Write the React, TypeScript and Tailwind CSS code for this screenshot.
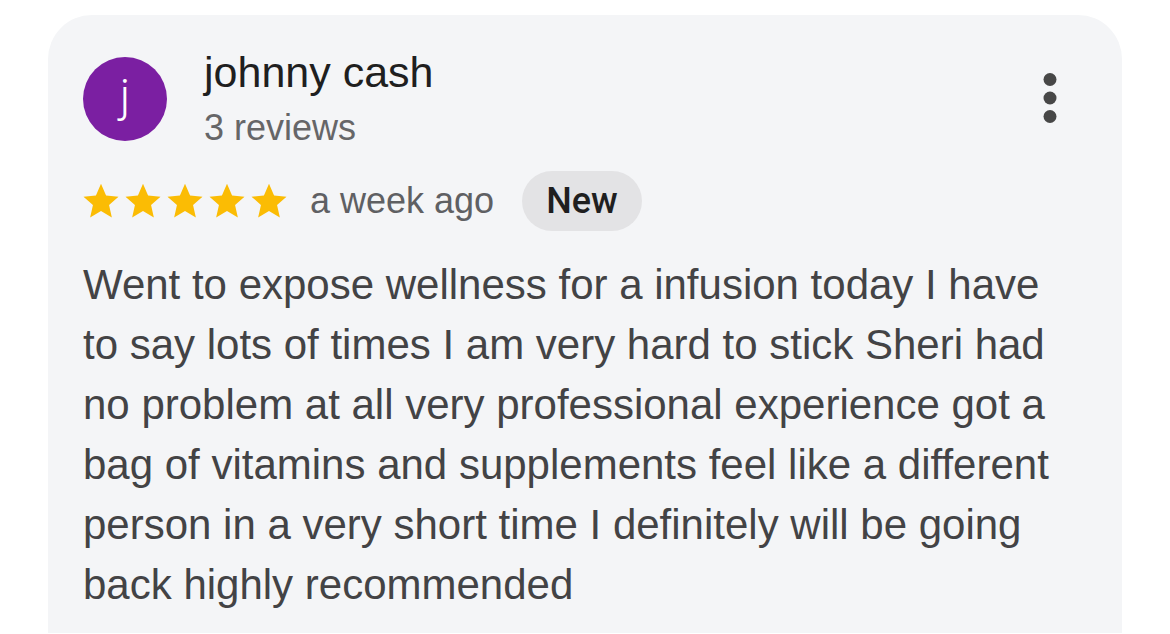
function Star() {
  return (
    <svg viewBox="0 0 24 24" className="w-[42px] h-[42px]" fill="#fbbc04">
      <path d="M12 2.2l2.9 6.6 7.1.7-5.4 4.8 1.6 7.1L12 17.7l-6.2 3.7 1.6-7.1L2 9.5l7.1-.7z" />
    </svg>
  );
}

function MoreDots() {
  return (
    <svg viewBox="0 0 20 56" className="w-[20px] h-[56px]" fill="#474747">
      <circle cx="10" cy="9.5" r="6.5" />
      <circle cx="10" cy="28" r="6.5" />
      <circle cx="10" cy="46.5" r="6.5" />
    </svg>
  );
}

export default function App() {
  const body =
    'Went to expose wellness for a infusion today I have to say lots of times I am very hard to stick Sheri had no problem at all very professional experience got a bag of vitamins and supplements feel like a different person in a very short time I definitely will be going back highly recommended';

  return (
    <div className="w-[1170px] h-[634px] bg-white px-[48px] pt-[15px] overflow-hidden font-['Liberation_Sans',Arial,sans-serif]">
      <div className="h-[618px] bg-[#f4f5f7] rounded-t-[44px] pl-[35px] pr-[49px] pt-[33px]">
        {/* header */}
        <div className="flex items-start">
          <div className="mt-[9px] w-[84px] h-[84px] rounded-full bg-[#7b1fa2] flex items-center justify-center shrink-0">
            <span className="text-white text-[46px] leading-none font-['Roboto',sans-serif] font-light -mt-[6px]">j</span>
          </div>
          <div className="ml-[37px] flex-1">
            <div className="text-[43px] leading-[48px] text-[#1f1f1f]">johnny cash</div>
            <div className="text-[36px] leading-[40px] mt-[12px] text-[#666668]">3 reviews</div>
          </div>
          <div className="mt-[22px] mr-[13px]">
            <MoreDots />
          </div>
        </div>

        {/* rating row */}
        <div className="flex items-center mt-[23px] h-[60px]">
          <div className="flex -ml-[3px]">
            <Star />
            <Star />
            <Star />
            <Star />
            <Star />
          </div>
          <span className="ml-[20px] text-[36px] text-[#5f6063]">a week ago</span>
          <span className="ml-[28px] h-[60px] px-[24px] rounded-full bg-[#e3e3e5] flex items-center text-[36px] text-[#1f1f1f] font-medium font-['Roboto',sans-serif]">
            New
          </span>
        </div>

        {/* review text */}
        <p className="mt-[24px] w-[990px] text-[42px] leading-[60px] text-[#434345]">{body}</p>
      </div>
    </div>
  );
}
